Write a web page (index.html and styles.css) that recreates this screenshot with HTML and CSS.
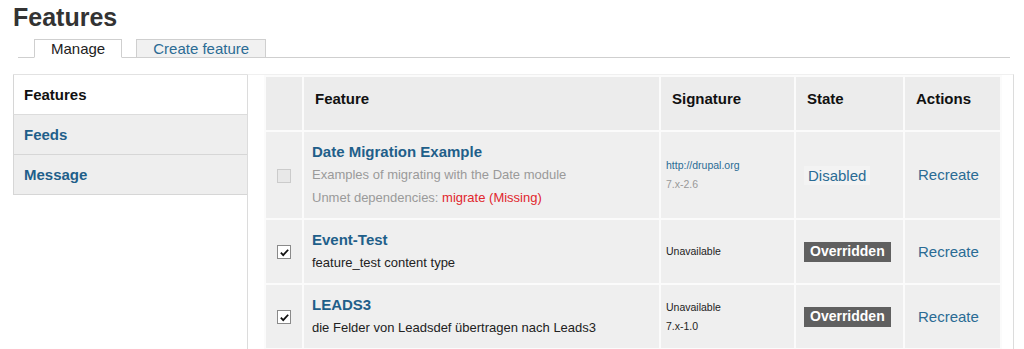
FILE: index.html
```html
<!DOCTYPE html>
<html lang="en">
<head>
  <meta charset="UTF-8" />
  <title>Features</title>
  <link rel="stylesheet" href="styles.css">
</head>
<body>
  <h1 class="page-title">Features</h1>

  <ul class="tabs">
    <li class="tab active"><a href="#">Manage</a></li>
    <li class="tab"><a href="#">Create feature</a></li>
  </ul>

  <div class="vtabs">
    <ul class="vtab-list">
      <li class="vtab selected"><a href="#">Features</a></li>
      <li class="vtab"><a href="#">Feeds</a></li>
      <li class="vtab"><a href="#">Message</a></li>
    </ul>

    <div class="vtab-panel">
      <table class="features">
        <thead>
          <tr>
            <th class="col-check"></th>
            <th class="col-name">Feature</th>
            <th class="col-sig">Signature</th>
            <th class="col-state">State</th>
            <th class="col-actions">Actions</th>
          </tr>
        </thead>
        <tbody>
          <tr class="disabled">
            <td class="col-check"><span class="checkbox off"></span></td>
            <td class="col-name">
              <a class="name" href="#">Date Migration Example</a>
              <div class="desc">Examples of migrating with the Date module</div>
              <div class="desc">Unmet dependencies: <span class="missing">migrate (Missing)</span></div>
            </td>
            <td class="col-sig">
              <a class="sig-link" href="#">http://drupal.org</a>
              <div class="version">7.x-2.6</div>
            </td>
            <td class="col-state"><a class="state-disabled" href="#">Disabled</a></td>
            <td class="col-actions"><a class="action" href="#">Recreate</a></td>
          </tr>
          <tr>
            <td class="col-check"><span class="checkbox on"><svg viewBox="0 0 12 12" width="11" height="11"><path d="M2 6.2 L4.6 8.8 L10 3" fill="none" stroke="#111" stroke-width="2"/></svg></span></td>
            <td class="col-name">
              <a class="name" href="#">Event-Test</a>
              <div class="desc">feature_test content type</div>
            </td>
            <td class="col-sig">
              <div>Unavailable</div>
            </td>
            <td class="col-state"><span class="badge">Overridden</span></td>
            <td class="col-actions"><a class="action" href="#">Recreate</a></td>
          </tr>
          <tr>
            <td class="col-check"><span class="checkbox on"><svg viewBox="0 0 12 12" width="11" height="11"><path d="M2 6.2 L4.6 8.8 L10 3" fill="none" stroke="#111" stroke-width="2"/></svg></span></td>
            <td class="col-name">
              <a class="name" href="#">LEADS3</a>
              <div class="desc">die Felder von Leadsdef übertragen nach Leads3</div>
            </td>
            <td class="col-sig">
              <div>Unavailable</div>
              <div>7.x-1.0</div>
            </td>
            <td class="col-state"><span class="badge">Overridden</span></td>
            <td class="col-actions"><a class="action" href="#">Recreate</a></td>
          </tr>
          <tr class="spacer">
            <td></td><td></td><td></td><td></td><td></td>
          </tr>
        </tbody>
      </table>
    </div>
  </div>
</body>
</html>
```

FILE: styles.css
```css
* { box-sizing: border-box; }

body {
  margin: 0;
  font-family: "Liberation Sans", Arial, sans-serif;
  color: #333;
  background: #fff;
  overflow: hidden;
}

a { text-decoration: none; }

.page-title {
  margin: 3px 0 0 13px;
  font-size: 25px;
  line-height: 28px;
  font-weight: bold;
  color: #333;
}

/* primary tabs */
.tabs {
  list-style: none;
  margin: 8px 14px 0 18px;
  padding: 0 0 0 16px;
  display: flex;
  gap: 14px;
  border-bottom: 1px solid #cfcfcf;
}
.tab {
  margin-bottom: -1px;
  border: 1px solid #cfcfcf;
  background: #f1f1f1;
}
.tab a {
  display: block;
  padding: 0 16px;
  font-size: 15px;
  line-height: 17px;
  color: #2a6b94;
}
.tab.active {
  background: #fff;
  border-bottom-color: #fff;
}
.tab.active a {
  color: #222;
}

/* vertical tabs */
.vtabs {
  display: flex;
  align-items: stretch;
  margin: 16px 0 0 13px;
  height: 400px;
}
.vtab-list {
  list-style: none;
  margin: 0;
  padding: 0;
  width: 234px;
  border-top: 1px solid #e2e2e2;
  align-self: flex-start;
}
.vtab {
  height: 40px;
  background: #eee;
  border-left: 1px solid #d6d6d6;
  border-bottom: 1px solid #d6d6d6;
}
.vtab a {
  display: block;
  padding: 0 10px;
  font-size: 15px;
  line-height: 39px;
  font-weight: bold;
  color: #1f5f8a;
}
.vtab.selected {
  background: #fff;
  border-bottom-color: #dcdcdc;
}
.vtab.selected a {
  color: #111;
}

.vtab-panel {
  width: 767px;
  border-left: 1px solid #dcdcdc;
  border-right: 1px solid #dcdcdc;
  border-top: 1px solid #f0f0f0;
  padding: 0 13px 0 16px;
}

/* features table */
.features {
  width: 736px;
  border-collapse: collapse;
  table-layout: fixed;
}
.features th,
.features td {
  background: #efefef;
  border: 2px solid #fbfbfb;
  text-align: left;
}
.features th {
  padding: 12px 11px 21px;
  font-size: 15px;
  line-height: 20px;
  font-weight: bold;
  color: #111;
  background: #ececec;
  vertical-align: top;
}
.features td {
  padding: 9px 8px;
  vertical-align: middle;
}

.col-check { width: 38px; }
.col-name { width: 357px; }
.col-sig { width: 135px; }
.col-state { width: 109px; }
.col-actions { width: 97px; }

.features td.col-check {
  padding: 0;
  text-align: center;
}
.checkbox {
  display: inline-block;
  width: 14px;
  height: 14px;
  border: 1px solid #8a8a8a;
  background: #fff;
  vertical-align: middle;
  line-height: 0;
}
.checkbox svg { margin-top: 1px; }
.checkbox.off {
  background: #e8e8e8;
  border-color: #cbcbcb;
}

.name {
  display: block;
  font-size: 15px;
  line-height: 22px;
  font-weight: bold;
  color: #1f5f8a;
}
.desc {
  font-size: 13px;
  line-height: 23px;
  color: #222;
}
.disabled .desc { color: #9a9a9a; }
.missing { color: #e1262c; }

.features td.col-sig {
  padding-left: 5px;
  font-size: 10.5px;
  line-height: 19px;
  color: #222;
}
.sig-link {
  display: block;
  color: #2a6b94;
}
.version { color: #999; }

.features td.col-state { padding-left: 8px; }
.state-disabled {
  display: inline-block;
  padding: 1px 4px;
  background: #f3f3f3;
  font-size: 15px;
  color: #2a6b94;
}
.badge {
  display: inline-block;
  padding: 1px 6px 2px;
  background: #606060;
  color: #fff;
  font-size: 14px;
  line-height: 17px;
  font-weight: bold;
}

.features td.col-actions { padding-left: 13px; }
.action {
  font-size: 15px;
  color: #2a6b94;
}

.spacer td { height: 40px; }
```
